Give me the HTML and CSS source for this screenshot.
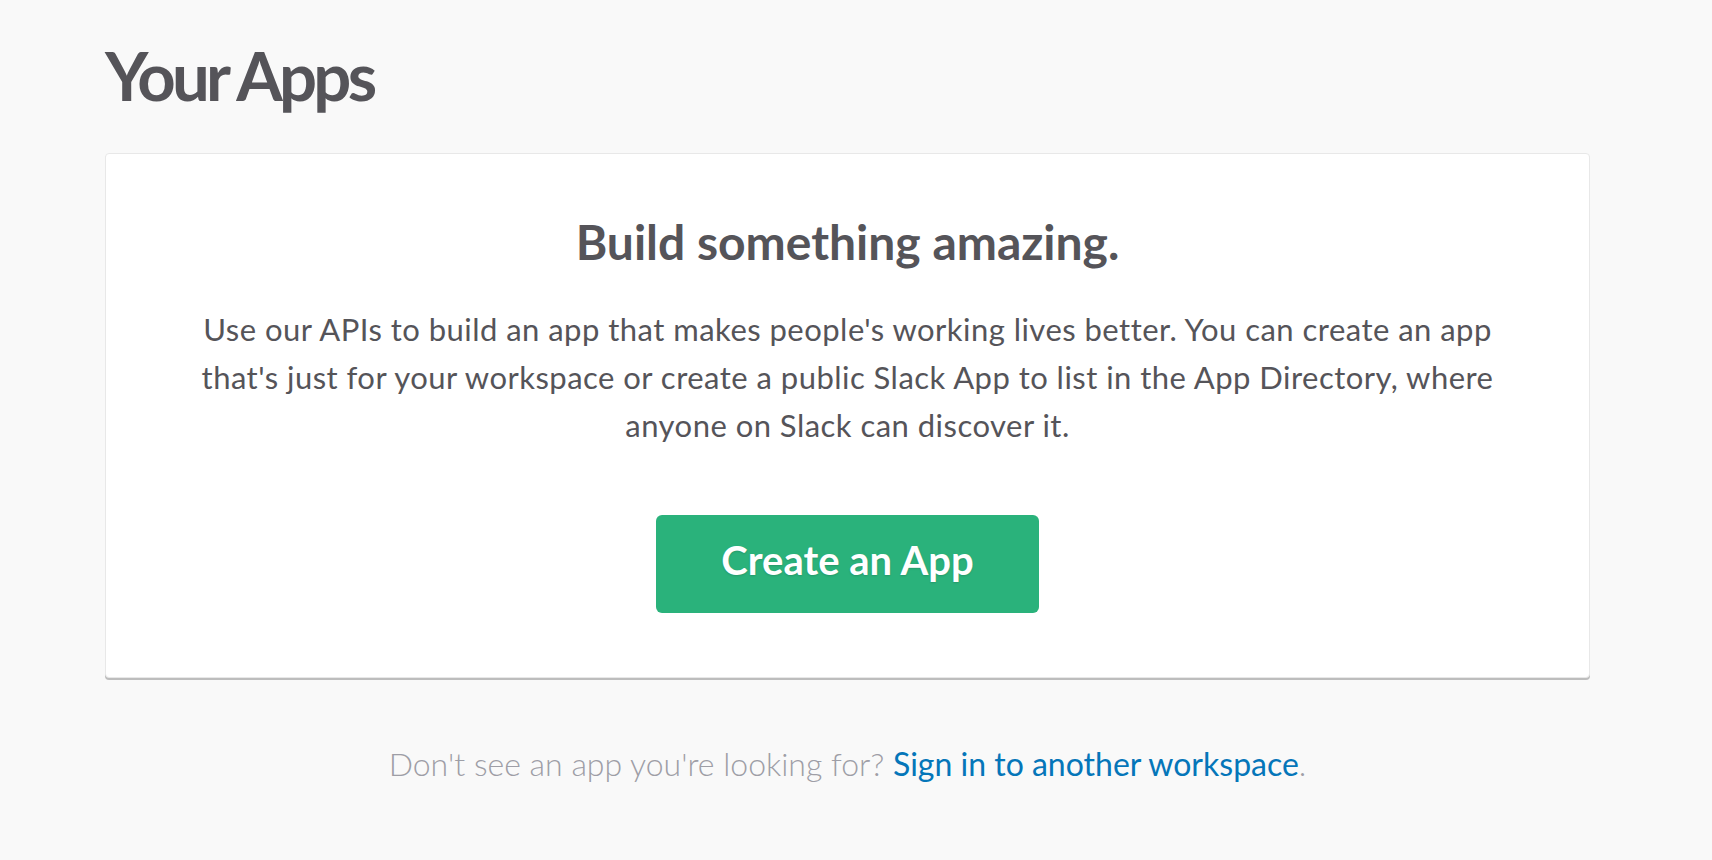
FILE: index.html
```html
<!DOCTYPE html>
<html lang="en">
<head>
<meta charset="utf-8">
<title>Your Apps</title>
<link rel="stylesheet" href="styles.css">
</head>
<body>
<main class="page">
  <h1 class="page-title">Your Apps</h1>
  <section class="card">
    <h2 class="card-heading">Build something amazing.</h2>
    <p class="card-text">Use our APIs to build an app that makes people's working lives better. You can create an app that's just for your workspace or create a public Slack App to list in the App Directory, where anyone on Slack can discover it.</p>
    <a class="btn-create" href="#">Create an App</a>
  </section>
  <p class="footer-note">Don't see an app you're looking for? <a class="footer-link" href="#">Sign in to another workspace</a>.</p>
</main>
</body>
</html>
```

FILE: styles.css
```css
html, body {
  margin: 0;
  padding: 0;
  background: #f9f9f9;
}

body {
  font-family: Lato, "Open Sans", "Liberation Sans", sans-serif;
  color: #555459;
}

.page {
  width: 1485px;
  padding: 35px 0 0 105px;
}

.page-title {
  margin: 0;
  font-size: 67px;
  line-height: 1.2;
  font-weight: 700;
  letter-spacing: -3.7px;
  color: #555459;
}

.card {
  margin-top: 38px;
  background: #fff;
  border: 1px solid #e8e8e8;
  border-radius: 4px;
  box-shadow: 0 2px 0 0 #bdbdbd;
  padding: 59px 0 64px;
  display: flex;
  flex-direction: column;
  align-items: center;
  text-align: center;
}

.card-heading {
  margin: 0;
  font-size: 48px;
  line-height: 1.2;
  font-weight: 700;
  color: #555459;
}

.card-text {
  margin: 34px 0 0;
  max-width: 1310px;
  font-size: 31px;
  line-height: 48px;
  font-weight: 400;
  letter-spacing: 0.47px;
  color: #555459;
}

.btn-create {
  margin-top: 66px;
  box-sizing: border-box;
  width: 383px;
  height: 98px;
  padding-top: 21px;
  background: #2ab27b;
  border-radius: 6px;
  color: #fff;
  font-size: 40px;
  line-height: 1.2;
  font-weight: 700;
  text-decoration: none;
  text-shadow: 0 1px 2px rgba(0, 0, 0, 0.15);
}

.footer-note {
  margin: 67px 0 0;
  text-align: center;
  font-size: 32px;
  line-height: 1.2;
  font-weight: 300;
  color: #9e9ea6;
}

.footer-link {
  color: #0576b9;
  font-weight: 400;
  text-decoration: none;
}
```
